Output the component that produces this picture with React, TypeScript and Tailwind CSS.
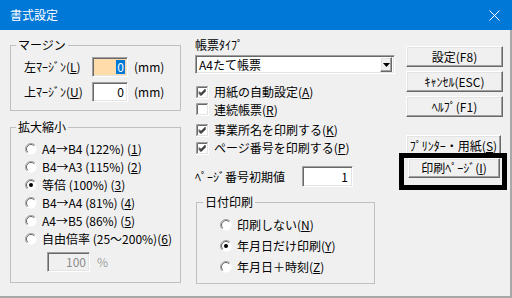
import React from 'react';

const font = "font-['Noto_Sans_CJK_JP',sans-serif]";

function Radio({ checked }: { checked?: boolean }) {
  return (
    <svg width="12" height="12" viewBox="0 0 12 12" className="shrink-0">
      <circle cx="6" cy="6" r="5.5" fill="#fff" />
      <path d="M2.1 9.9 A5.5 5.5 0 0 1 9.9 2.1" fill="none" stroke="#a0a0a0" />
      <path d="M2.8 9.2 A4.5 4.5 0 0 1 9.2 2.8" fill="none" stroke="#696969" />
      {checked && <circle cx="6" cy="6" r="2" fill="#000" />}
    </svg>
  );
}

function Check({ checked }: { checked?: boolean }) {
  return (
    <svg width="13" height="13" viewBox="0 0 13 13" className="shrink-0">
      <rect x="0" y="0" width="13" height="13" fill="#fff" />
      <path d="M0.5 12 V0.5 H12" fill="none" stroke="#a0a0a0" />
      <path d="M1.5 11 V1.5 H11" fill="none" stroke="#696969" />
      <path d="M1 11.5 H11.5 V1" fill="none" stroke="#e3e3e3" />
      {checked && <path d="M3 5.5 L5 7.5 L9.5 3 M3 6.5 L5 8.5 L9.5 4 M3 7.5 L5 9.5 L9.5 5" fill="none" stroke="#000" strokeWidth="1" />}
    </svg>
  );
}

function Btn({ children, className = '' }: { children: React.ReactNode; className?: string }) {
  return (
    <div
      className={`flex items-center justify-center bg-[#f0f0f0] border border-t-white border-l-white border-r-[#696969] border-b-[#696969] shadow-[inset_-1px_-1px_0_#a0a0a0,inset_1px_1px_0_#e3e3e3] ${className}`}
    >
      {children}
    </div>
  );
}

const sunken =
  'border border-t-[#a0a0a0] border-l-[#a0a0a0] border-r-white border-b-white shadow-[inset_1px_1px_0_#696969,inset_-1px_-1px_0_#e3e3e3]';

export default function App() {
  return (
    <div className={`relative w-[512px] h-[298px] bg-[#f0f0f0] text-[12px] leading-[14px] text-black ${font}`}>
      {/* title bar */}
      <div className="h-[30px] bg-[#0078d7] flex items-center justify-between pl-[10px] pr-[12px] text-white">
        <span>書式設定</span>
        <svg width="11" height="11" viewBox="0 0 11 11">
          <path d="M0.5 0.5 L10.5 10.5 M10.5 0.5 L0.5 10.5" stroke="#fff" strokeWidth="1" />
        </svg>
      </div>

      <div className="h-[268px] flex pl-[10px] pt-[8px] border-r-2 border-b-2 border-r-[#a8a8a8] border-b-[#a8a8a8]">
        {/* left column */}
        <div className="w-[171px] flex flex-col">
          <fieldset className="border border-[#c0c0c0]">
            <legend className="ml-[5px] px-[2px]">マージン</legend>
            <div className="pl-[13px] pt-[5px] pb-[8px] flex flex-col gap-[5px]">
              <div className="flex items-center h-[20px]">
                <span className="w-[68px]">左ﾏｰｼﾞﾝ(<u>L</u>)</span>
                <div className={`w-[36px] h-[20px] bg-[#ffdcaa] flex items-center justify-end pr-[2px] ${sunken}`}>
                  <span className="bg-[#0078d7] text-white px-[1px]">0</span>
                </div>
                <span className="ml-[6px]">(mm)</span>
              </div>
              <div className="flex items-center h-[20px]">
                <span className="w-[68px]">上ﾏｰｼﾞﾝ(<u>U</u>)</span>
                <div className={`w-[36px] h-[20px] bg-white flex items-center justify-end pr-[3px] ${sunken}`}>0</div>
                <span className="ml-[6px]">(mm)</span>
              </div>
            </div>
          </fieldset>

          <fieldset className="mt-[9px] border border-[#c0c0c0]">
            <legend className="ml-[5px] px-[2px]">拡大縮小</legend>
            <div className="pt-[6px] pb-[10px]">
              {[
                ['A4→B4 (122%) (', '1', ')'],
                ['B4→A3 (115%) (', '2', ')'],
                ['等倍 (100%) (', '3', ')'],
                ['B4→A4 (81%) (', '4', ')'],
                ['A4→B5 (86%) (', '5', ')'],
                ['自由倍率 (25～200%)(', '6', ')'],
              ].map((r, i) => (
                <div key={i} className="flex items-center h-[18px] pl-[14px] gap-[5px]">
                  <Radio checked={i === 2} />
                  <span className="whitespace-pre">
                    {r[0]}
                    <u>{r[1]}</u>
                    {r[2]}
                  </span>
                </div>
              ))}
              <div className="flex items-center mt-[4px] pl-[36px]">
                <div className={`w-[43px] h-[20px] bg-[#f0f0f0] flex items-center justify-end pr-[3px] text-[#8c8c8c] ${sunken}`}>
                  100
                </div>
                <span className="ml-[7px] text-[#a0a0a0]">%</span>
              </div>
            </div>
          </fieldset>
        </div>

        {/* middle column */}
        <div className="ml-[14px] w-[200px] flex flex-col">
          <span>帳票ﾀｲﾌﾟ</span>
          <div className={`mt-[3px] h-[19px] bg-white flex items-center justify-between pl-[3px] pr-[2px] ${sunken}`}>
            <span>A4たて帳票</span>
            <Btn className="w-[12px] h-[15px] border-t-[#e3e3e3] border-l-[#e3e3e3]">
              <svg width="7" height="4" viewBox="0 0 7 4">
                <path d="M0 0 H7 L3.5 4 Z" fill="#000" />
              </svg>
            </Btn>
          </div>
          <div className="mt-[9px] h-[18px] flex items-center gap-[5px] pl-[1px]">
            <Check checked />
            <span>用紙の自動設定(<u>A</u>)</span>
          </div>
          <div className="h-[17px] flex items-center gap-[5px] pl-[1px]">
            <Check />
            <span>連続帳票(<u>R</u>)</span>
          </div>
          <div className="mt-[3px] h-[18px] flex items-center gap-[5px] pl-[1px]">
            <Check checked />
            <span>事業所名を印刷する(<u>K</u>)</span>
          </div>
          <div className="h-[18px] flex items-center gap-[5px] pl-[1px]">
            <Check checked />
            <span>ページ番号を印刷する(<u>P</u>)</span>
          </div>
          <div className="mt-[9px] h-[21px] flex items-center">
            <span className="w-[107px]">ﾍﾟｰｼﾞ番号初期値</span>
            <div className={`w-[51px] h-[21px] bg-white flex items-center justify-end pr-[4px] ${sunken}`}>1</div>
          </div>
          <fieldset className="mt-[8px] ml-[1px] w-[179px] border border-[#c0c0c0]">
            <legend className="ml-[6px] px-[2px]">日付印刷</legend>
            <div className="pl-[23px] pt-[5px] pb-[6px]">
              {[
                ['印刷しない(', 'N', ')'],
                ['年月日だけ印刷(', 'Y', ')'],
                ['年月日＋時刻(', 'Z', ')'],
              ].map((r, i) => (
                <div key={i} className="h-[21px] flex items-center gap-[5px]">
                  <Radio checked={i === 1} />
                  <span>
                    {r[0]}
                    <u>{r[1]}</u>
                    {r[2]}
                  </span>
                </div>
              ))}
            </div>
          </fieldset>
        </div>

        {/* right column */}
        <div className="ml-[11px] w-[97px] pt-[8px] flex flex-col">
          <Btn className="h-[21px]">設定(F8)</Btn>
          <Btn className="mt-[4px] h-[21px]">ｷｬﾝｾﾙ(ESC)</Btn>
          <Btn className="mt-[4px] h-[21px]">ﾍﾙﾌﾟ(F1)</Btn>
          <Btn className="mt-[18px] h-[21px] w-[95px]">
            ﾌﾟﾘﾝﾀｰ・用紙(<u>S</u>)
          </Btn>
          <Btn className="mt-[2px] ml-[2px] h-[20px] w-[92px]">
            印刷ﾍﾟｰｼﾞ(<u>I</u>)
          </Btn>
        </div>
      </div>

      {/* highlight frame */}
      <div className="absolute left-[399px] top-[153px] w-[108px] h-[37px] border-[5px] border-black" />
    </div>
  );
}
